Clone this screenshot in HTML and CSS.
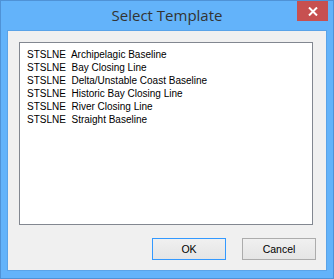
FILE: index.html
```html
<!DOCTYPE html>
<html lang="en">
<head>
    <meta charset="UTF-8">
    <meta name="viewport" content="width=device-width, initial-scale=1.0">
    <title>Select Template</title>
    <link rel="stylesheet" href="styles.css">
</head>
<body>
    <div class="window">
        <div class="titlebar">
            <span></span>
            <span class="title">Select Template</span>
            <button class="close" title="Close">
                <svg width="10" height="9" viewBox="0 0 10 9">
                    <path d="M1 0.5 L9 8.5 M9 0.5 L1 8.5" stroke="#fff" stroke-width="2" fill="none"/>
                </svg>
            </button>
        </div>

        <div class="client">
            <ul class="listbox">
                <li>STSLNE  Archipelagic Baseline</li>
                <li>STSLNE  Bay Closing Line</li>
                <li>STSLNE  Delta/Unstable Coast Baseline</li>
                <li>STSLNE  Historic Bay Closing Line</li>
                <li>STSLNE  River Closing Line</li>
                <li>STSLNE  Straight Baseline</li>
            </ul>

            <div class="buttons">
                <button class="btn default">OK</button>
                <button class="btn">Cancel</button>
            </div>
        </div>
    </div>
</body>
</html>
```

FILE: styles.css
```css
body {
    margin: 0;
    padding: 0;
    font-family: 'Liberation Sans', Arial, sans-serif;
}
.window {
    width: 334px;
    height: 279px;
    box-sizing: border-box;
    background: #63b3fa;
    border: 1px solid #4f92d6;
    padding: 0 6px 7px 6px;
    display: flex;
    flex-direction: column;
}
.titlebar {
    height: 29px;
    display: grid;
    grid-template-columns: 1fr auto 1fr;
    align-items: start;
    margin: 0 -1px 0 0;
}
.title {
    font-family: 'Open Sans', sans-serif;
    font-size: 15px;
    color: #333;
    line-height: 29px;
    margin-left: -1px;
}
.close {
    justify-self: end;
    width: 31px;
    height: 20px;
    border: none;
    padding: 0;
    background: #c75050;
    display: flex;
    align-items: center;
    justify-content: center;
}
.client {
    flex: 1;
    background: #f0f0f0;
    border: 1px solid #5aa3e8;
    display: flex;
    flex-direction: column;
}
.listbox {
    list-style: none;
    margin: 11px 13px 0 11px;
    padding: 5px 7px;
    height: 183px;
    box-sizing: border-box;
    background: #fff;
    border: 1px solid #828790;
    font-size: 10px;
    line-height: 13px;
    color: #000;
}
.listbox li {
    white-space: pre;
}
.buttons {
    display: flex;
    justify-content: flex-end;
    gap: 16px;
    margin-top: 13px;
    padding-right: 10px;
}
.btn {
    width: 74px;
    height: 22px;
    font-family: 'Liberation Sans', Arial, sans-serif;
    font-size: 10.5px;
    color: #000;
    background: linear-gradient(#f0f0f0, #e5e5e5);
    border: 1px solid #acacac;
    padding: 0;
}
.btn.default {
    border-color: #3399ff;
}
```
